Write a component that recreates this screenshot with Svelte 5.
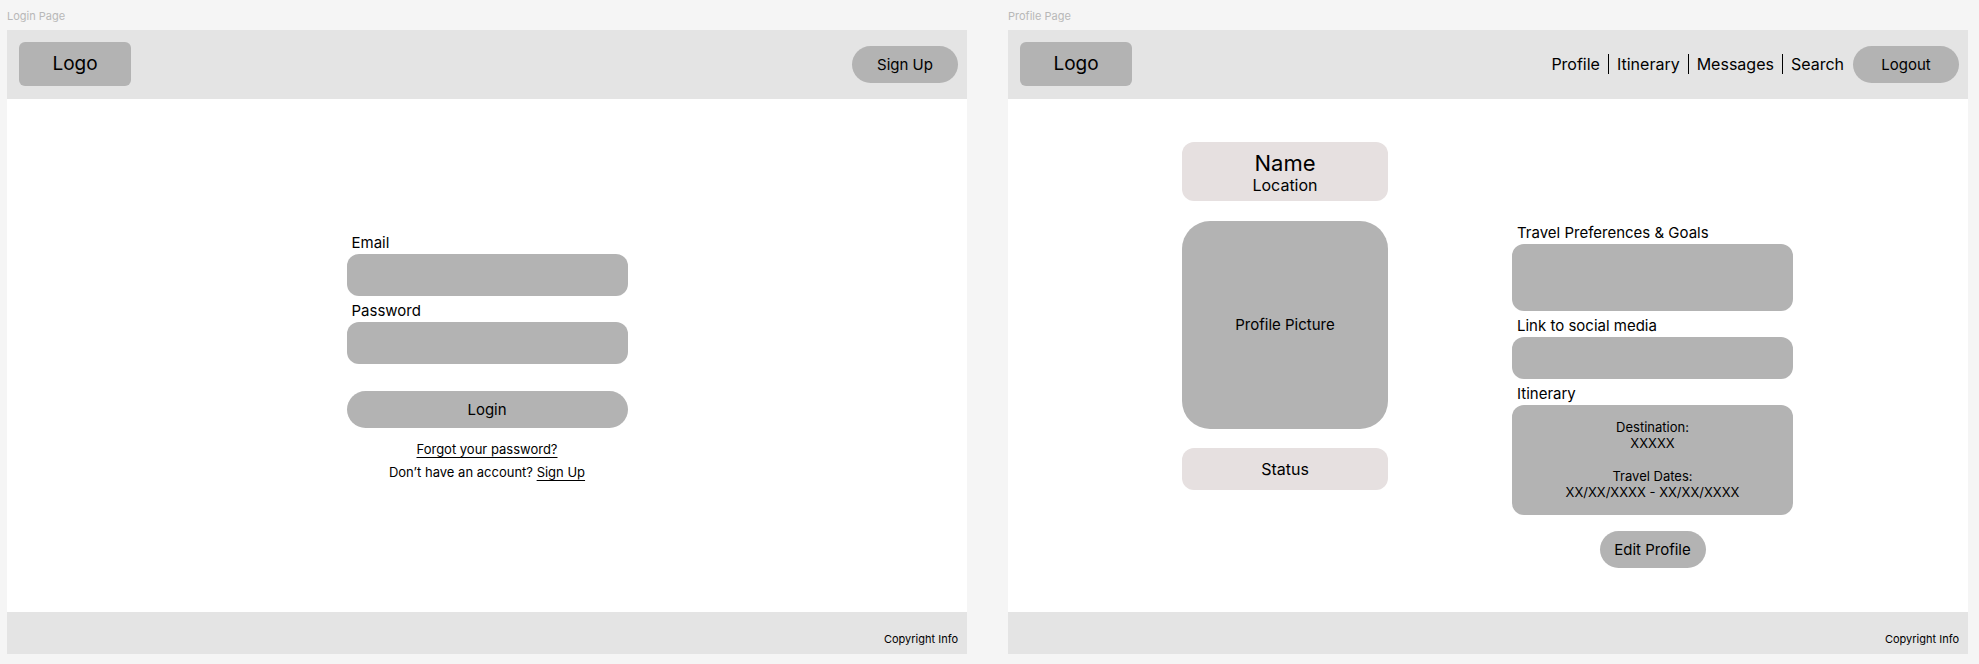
<script>
  const links = ['Profile', 'Itinerary', 'Messages', 'Search'];
  let email = $state('');
  let password = $state('');
  let preferences = $state('');
  let social = $state('');
</script>

<div class="canvas">
  <section class="artboard">
    <h2 class="caption">Login Page</h2>
    <div class="page">
      <header>
        <div class="logo">Logo</div>
        <button class="pill" type="button">Sign Up</button>
      </header>
      <main>
        <form class="fields" onsubmit={(e) => e.preventDefault()}>
          <label for="email">Email</label>
          <input id="email" class="box" type="email" bind:value={email} />
          <label for="password">Password</label>
          <input id="password" class="box" type="password" bind:value={password} />
          <button class="pill wide" type="submit">Login</button>
          <div class="help">
            <p><a href="#forgot">Forgot your password?</a></p>
            <p>Don’t have an account? <a href="#signup">Sign Up</a></p>
          </div>
        </form>
      </main>
      <footer>Copyright Info</footer>
    </div>
  </section>

  <section class="artboard">
    <h2 class="caption">Profile Page</h2>
    <div class="page">
      <header>
        <div class="logo">Logo</div>
        <nav>
          {#each links as link}
            <a href="#{link.toLowerCase()}">{link}</a>
          {/each}
        </nav>
        <button class="pill" type="button">Logout</button>
      </header>
      <main>
        <div class="profile">
          <div class="person">
            <div class="card identity">
              <h1>Name</h1>
              <p>Location</p>
            </div>
            <div class="picture">Profile Picture</div>
            <div class="card status">Status</div>
          </div>
          <div class="fields details">
            <label for="preferences">Travel Preferences &amp; Goals</label>
            <textarea id="preferences" class="box tall" bind:value={preferences}></textarea>
            <label for="social">Link to social media</label>
            <input id="social" class="box" type="url" bind:value={social} />
            <h3>Itinerary</h3>
            <div class="box trip">
              <p>Destination:<br />XXXXX</p>
              <p>Travel Dates:<br />XX/XX/XXXX - XX/XX/XXXX</p>
            </div>
            <button class="pill edit" type="button">Edit Profile</button>
          </div>
        </div>
      </main>
      <footer>Copyright Info</footer>
    </div>
  </section>
</div>

<style>
  :global(body) {
    background: #f5f5f5;
  }
  .canvas {
    box-sizing: border-box;
    min-height: 100vh;
    display: grid;
    grid-template-columns: 1fr 1fr;
    gap: 41px;
    padding: 0 11px 10px 7px;
    font-family: Inter, sans-serif;
    font-size: 15px;
    color: #000;
  }
  .canvas * {
    box-sizing: border-box;
  }
  h1, h2, h3, p {
    margin: 0;
    font-weight: 400;
  }
  a {
    color: inherit;
  }
  .artboard {
    display: flex;
    flex-direction: column;
  }
  .caption {
    height: 30px;
    padding-top: 2px;
    font-size: 11px;
    line-height: 28px;
    color: #b8b8b8;
  }
  .page {
    flex: 1;
    display: flex;
    flex-direction: column;
    background: #fff;
  }
  header {
    height: 69px;
    display: flex;
    align-items: center;
    justify-content: flex-end;
    gap: 9px;
    padding: 0 9px 1px 12px;
    background: #e4e4e4;
  }
  .logo {
    width: 112px;
    height: 44px;
    margin-right: auto;
    border-radius: 6px;
    background: #b3b3b3;
    font-size: 19px;
    line-height: 44px;
    text-align: center;
  }
  .pill {
    width: 106px;
    height: 37px;
    padding: 0;
    border: 0;
    border-radius: 19px;
    background: #b3b3b3;
    color: inherit;
    font: inherit;
    cursor: pointer;
  }
  nav {
    display: flex;
    font-size: 16px;
    line-height: 20px;
  }
  nav a {
    text-decoration: none;
  }
  nav a + a {
    margin-left: 8px;
    padding-left: 8px;
    border-left: 1px solid #000;
  }
  main {
    flex: 1;
    display: flex;
    align-items: center;
    justify-content: center;
  }
  .fields {
    width: 281px;
    display: flex;
    flex-direction: column;
  }
  label, h3 {
    padding: 4px 0 0 5px;
    font-size: 15px;
    line-height: 22px;
  }
  .box {
    width: 100%;
    height: 42px;
    padding: 0 12px;
    border: 0;
    border-radius: 12px;
    background: #b3b3b3;
    font: inherit;
    resize: none;
  }
  .box.tall {
    height: 67px;
    padding: 12px;
  }
  .wide {
    width: 100%;
    margin-top: 27px;
  }
  .help {
    margin-top: 10px;
    font-size: 13px;
    line-height: 23px;
    text-align: center;
  }
  .help a {
    text-underline-offset: 3px;
    text-decoration-skip-ink: none;
  }
  .profile {
    display: flex;
    align-items: flex-start;
    gap: 124px;
    padding: 0 1px 2px 0;
  }
  .person {
    width: 206px;
    display: flex;
    flex-direction: column;
    text-align: center;
  }
  .card {
    border-radius: 12px;
    background: #e6e0e0;
    font-size: 16px;
  }
  .identity {
    height: 59px;
    padding: 8px 0;
    line-height: 18px;
  }
  h1 {
    font-size: 22px;
    line-height: 26px;
  }
  .picture {
    height: 208px;
    margin: 20px 0 19px;
    border-radius: 28px;
    background: #b3b3b3;
    line-height: 208px;
  }
  .status {
    line-height: 42px;
  }
  .details {
    padding-top: 76px;
  }
  .box.trip {
    height: 110px;
    display: flex;
    flex-direction: column;
    justify-content: center;
    gap: 17px;
    font-size: 13px;
    line-height: 16px;
    text-align: center;
  }
  .edit {
    align-self: center;
    margin-top: 16px;
  }
  footer {
    height: 42px;
    padding: 12px 9px 0;
    background: #e4e4e4;
    font-size: 11px;
    line-height: 30px;
    text-align: right;
  }
</style>
